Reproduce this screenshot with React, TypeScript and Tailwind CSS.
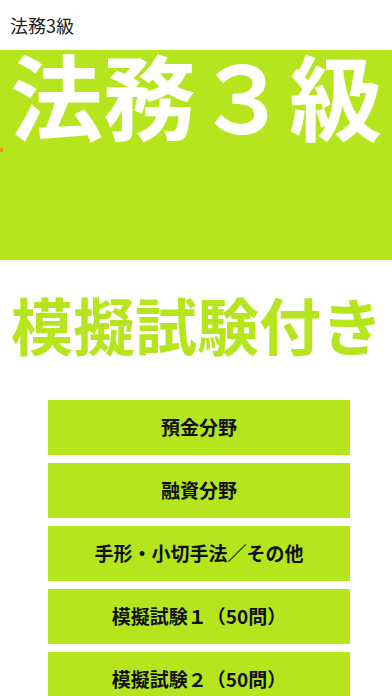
import React from 'react';

const menuItems = ['預金分野', '融資分野', '手形・小切手法／その他', '模擬試験１（50問）', '模擬試験２（50問）'];

export default function App() {
    return (
        <div className="w-[392px] h-[696px] overflow-hidden bg-white" style={{ fontFamily: '"Noto Sans CJK JP", "Noto Sans", sans-serif' }}>
            {/* Header */}
            <div className="h-[50px] flex items-center px-[10px]">
                <span className="text-[18px] text-[#222] leading-none">法務3級</span>
            </div>

            {/* Banner */}
            <div className="h-[210px] bg-[#b5e61d] relative">
                <div className="pl-[10px] text-white font-bold text-[93px] leading-[88px] whitespace-nowrap">
                    法務３級
                </div>
                <span className="absolute left-0 top-[98px] w-[3px] h-[4px] bg-[#f08a24]" />
            </div>

            {/* Subtitle */}
            <div className="h-[140px] flex items-center pl-[11px] pb-[12px]">
                <span className="text-[#b5e61d] font-bold text-[62px] leading-none whitespace-nowrap">模擬試験付き</span>
            </div>

            {/* Menu */}
            <div className="flex flex-col gap-[8px] pl-[48px]">
                {menuItems.map((item) => (
                    <button
                        key={item}
                        className="w-[302px] h-[55px] bg-[#b5e61d] flex items-center justify-center text-[19px] font-bold text-[#111]"
                    >
                        {item}
                    </button>
                ))}
            </div>
        </div>
    );
}
